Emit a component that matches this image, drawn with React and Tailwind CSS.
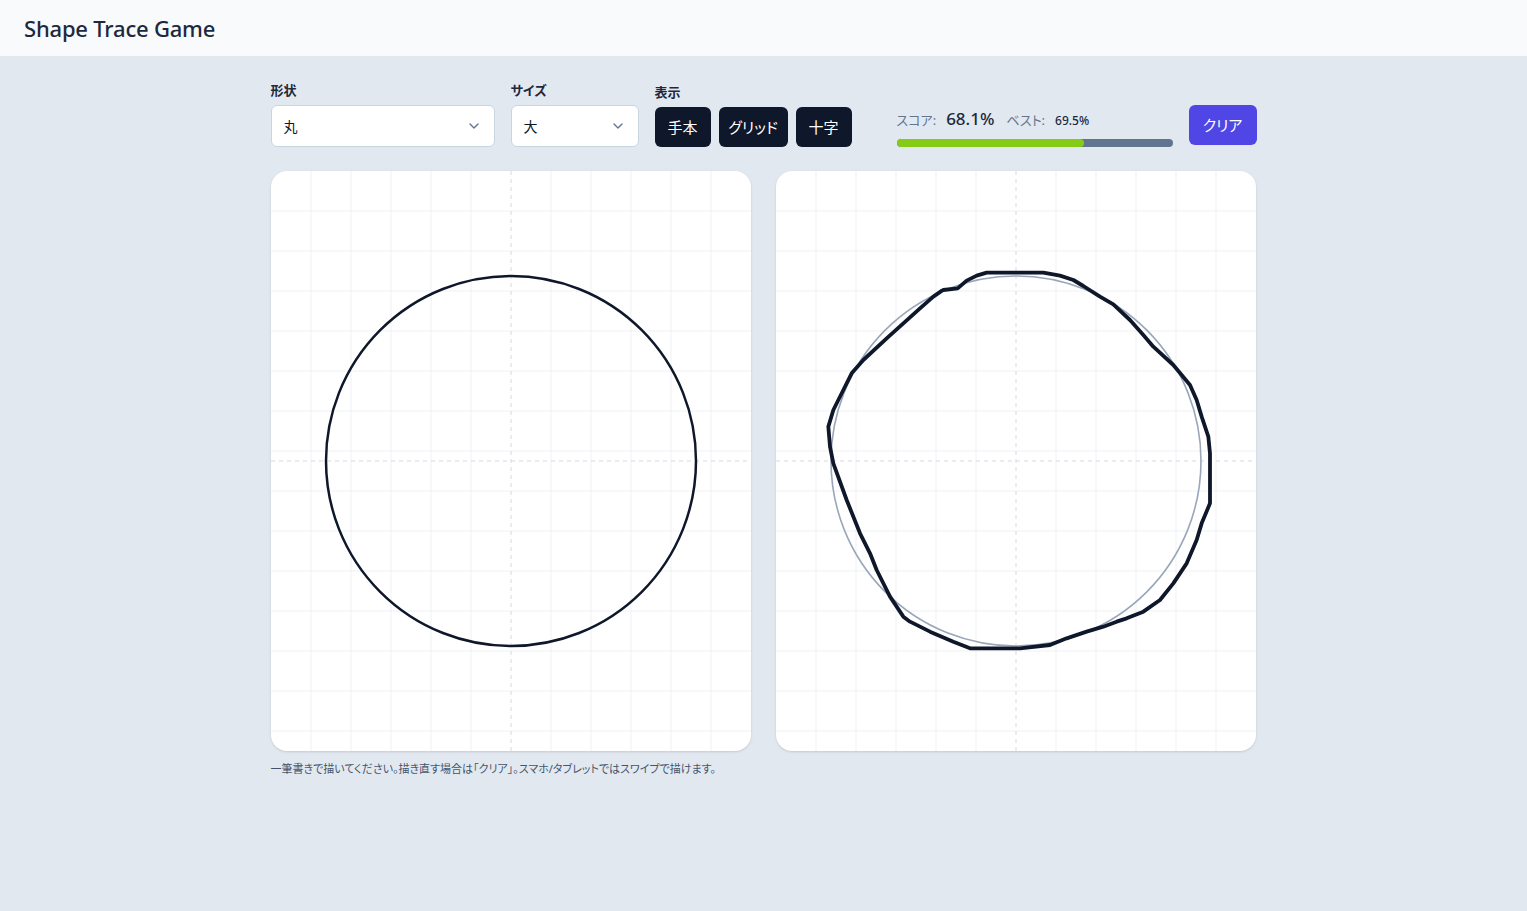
import { ChevronDown } from 'lucide-react';

const FONT = { fontFamily: '"Noto Sans", "Noto Sans CJK JP", sans-serif', fontFeatureSettings: '"palt"' };

const W = 480;
const H = 580;

// drawn stroke, sampled in a 3x zoomed frame, offset later by transform
const drawn = [
  [370, 90], [413, 85], [440, 62], [470, 47], [500, 38], [670, 38], [720, 47], [760, 60], [790, 78],
  [840, 110], [880, 133], [930, 180], [970, 225], [1000, 260], [1060, 315], [1110, 375], [1130, 420],
  [1145, 470], [1165, 530], [1170, 580], [1170, 730], [1145, 790], [1130, 840], [1100, 910], [1060, 970],
  [1020, 1020], [970, 1055], [920, 1075], [890, 1085], [850, 1100], [800, 1115], [740, 1135], [690, 1155],
  [600, 1165], [450, 1165], [400, 1145], [330, 1115], [270, 1085], [250, 1070], [210, 1010], [170, 930],
  [150, 880], [120, 820], [80, 720], [40, 610], [30, 560], [25, 500], [40, 450], [70, 390], [95, 340],
  [130, 300], [200, 235], [250, 190], [300, 145], [340, 110], [366, 92],
];

function Grid() {
  const xs = [];
  for (let x = 40; x < W; x += 40) xs.push(x);
  const ys = [];
  for (let y = 40; y < H; y += 40) ys.push(y);
  return (
    <g>
      {xs.map((x) =>
        x === 240 ? null : <line key={'x' + x} x1={x} y1={0} x2={x} y2={H} stroke="#eef1f5" strokeWidth="1" />
      )}
      {ys.map((y) => <line key={'y' + y} x1={0} y1={y} x2={W} y2={y} stroke="#eef1f5" strokeWidth="1" />)}
      <line x1={240} y1={0} x2={240} y2={H} stroke="#d4d9e1" strokeWidth="1" strokeDasharray="4 4" />
      <line x1={0} y1={290} x2={W} y2={290} stroke="#d4d9e1" strokeWidth="1" strokeDasharray="4 4" />
    </g>
  );
}

function Board({ children }) {
  return (
    <div className="w-[480px] h-[580px] bg-white rounded-2xl overflow-hidden shadow-sm">
      <svg width={W} height={H} viewBox={`0 0 ${W} ${H}`}>
        <Grid />
        {children}
      </svg>
    </div>
  );
}

function Select({ value, width }) {
  return (
    <div
      className={`${width} h-[42px] bg-white border border-slate-300 rounded-md flex items-center justify-between pl-3 pr-3 text-[14px] text-slate-900`}
    >
      <span>{value}</span>
      <ChevronDown size={16} className="text-slate-500" />
    </div>
  );
}

export default function App() {
  const pts = drawn.map((p) => p.join(',')).join(' ');
  return (
    <div className="min-h-screen bg-[#e2e8f0]" style={FONT}>
      <header className="h-[56px] bg-[#f8fafc] flex items-center px-6">
        <h1 className="text-[22px] font-medium text-slate-800 tracking-[-0.2px]">Shape Trace Game</h1>
      </header>

      <main className="w-[986px] mx-auto pt-[24px]">
        <div className="flex items-end">
          <div className="flex flex-col gap-[5px]">
            <label className="text-[13px] font-semibold text-slate-800 leading-[20px]">形状</label>
            <Select value="丸" width="w-[224px]" />
          </div>
          <div className="flex flex-col gap-[5px] ml-4">
            <label className="text-[13px] font-semibold text-slate-800 leading-[20px]">サイズ</label>
            <Select value="大" width="w-[128px]" />
          </div>
          <div className="flex flex-col gap-[5px] ml-4">
            <label className="text-[13px] font-semibold text-slate-800 leading-[20px]">表示</label>
            <div className="flex gap-2">
              <button className="h-[40px] w-[56px] rounded-md bg-[#0f172a] text-white text-[15px]">手本</button>
              <button className="h-[40px] w-[69px] rounded-md bg-[#0f172a] text-white text-[15px]">グリッド</button>
              <button className="h-[40px] w-[56px] rounded-md bg-[#0f172a] text-white text-[15px]">十字</button>
            </div>
          </div>
          <div className="ml-[45px] w-[276px] flex flex-col">
            <div className="flex items-baseline">
              <span className="text-[13px] text-slate-500">スコア:</span>
              <span className="ml-[10px] text-[17px] font-medium text-slate-800">68.1%</span>
              <span className="ml-[12px] text-[13px] text-slate-500">ベスト:</span>
              <span className="ml-[10px] text-[12px] font-medium text-slate-800">69.5%</span>
            </div>
            <div className="mt-[8px] h-[8px] rounded-full bg-slate-500 overflow-hidden">
              <div className="h-full bg-[#84cc16] rounded-full" style={{ width: '68.1%' }} />
            </div>
          </div>
          <button className="ml-auto mb-[2px] h-[40px] w-[68px] rounded-md bg-[#4f46e5] text-white text-[15px]">
            クリア
          </button>
        </div>

        <div className="flex gap-[25px] mt-[24px]">
          <Board>
            <circle cx={240} cy={290} r={185} fill="none" stroke="#0f172a" strokeWidth="2.5" />
          </Board>
          <Board>
            <circle cx={240} cy={290} r={185} fill="none" stroke="#9aa7ba" strokeWidth="1.6" />
            <g transform="translate(44 89) scale(0.33333)">
              <polygon
                points={pts}
                fill="none"
                stroke="#0f172a"
                strokeWidth="3.8"
                strokeLinejoin="round"
                vectorEffect="non-scaling-stroke"
              />
            </g>
          </Board>
        </div>

        <p className="mt-[10px] text-[11px] text-slate-600">
          一筆書きで描いてください。描き直す場合は「クリア」。スマホ/タブレットではスワイプで描けます。
        </p>
      </main>
    </div>
  );
}
